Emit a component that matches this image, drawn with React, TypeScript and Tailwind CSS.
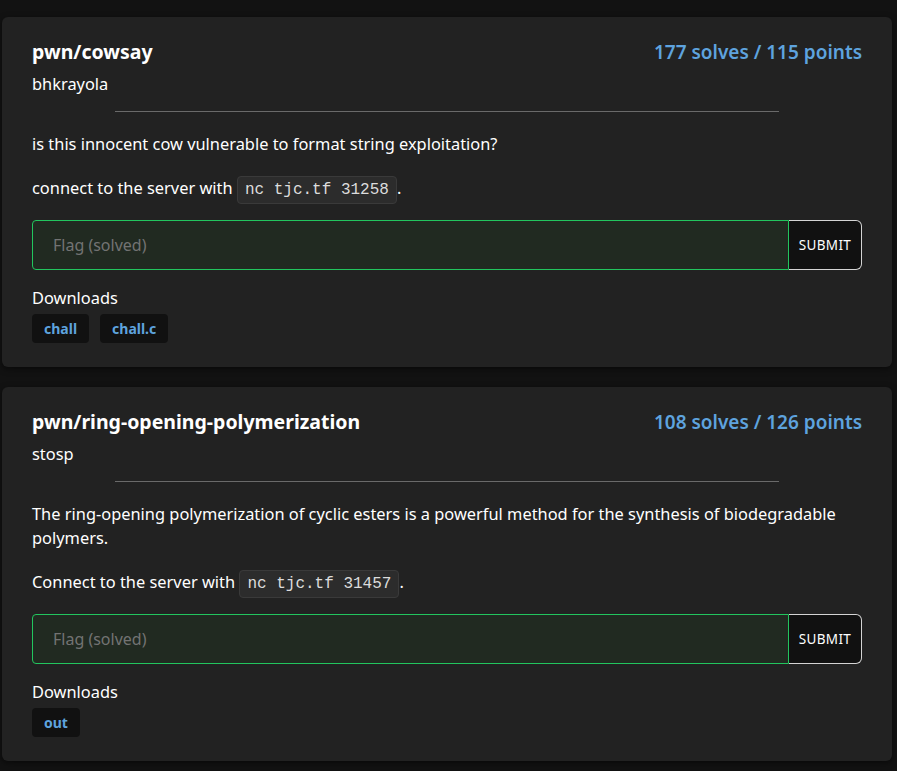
const font = { fontFamily: '"Noto Sans", "Open Sans", sans-serif' };

type Challenge = {
  name: string;
  author: string;
  stats: string;
  description: string;
  connect: string;
  command: string;
  files: string[];
};

const challenges: Challenge[] = [
  {
    name: 'pwn/cowsay',
    author: 'bhkrayola',
    stats: '177 solves / 115 points',
    description: 'is this innocent cow vulnerable to format string exploitation?',
    connect: 'connect to the server with',
    command: 'nc tjc.tf 31258',
    files: ['chall', 'chall.c'],
  },
  {
    name: 'pwn/ring-opening-polymerization',
    author: 'stosp',
    stats: '108 solves / 126 points',
    description:
      'The ring-opening polymerization of cyclic esters is a powerful method for the synthesis of biodegradable polymers.',
    connect: 'Connect to the server with',
    command: 'nc tjc.tf 31457',
    files: ['out'],
  },
];

function ChallengeCard({ c }: { c: Challenge }) {
  return (
    <div className="bg-[#222222] rounded-md px-[30px] pt-[21px] pb-[24px] shadow-[0_2px_6px_rgba(0,0,0,0.5)]">
      {/* Header */}
      <div className="flex items-center justify-between">
        <h2 className="text-[19.5px] leading-[28px] font-bold text-white">{c.name}</h2>
        <span className="text-[19px] leading-[28px] font-semibold text-[#5ea3de]">{c.stats}</span>
      </div>
      <div className="mt-[6px] text-[16.4px] leading-[24px] text-white">{c.author}</div>
      <hr className="mx-auto mt-[15px] w-[80%] border-0 border-t border-[#6a6a6a]" />

      {/* Description */}
      <p className="mt-[20px] text-[16.4px] leading-[24px] text-white">{c.description}</p>
      <p className="mt-[20px] text-[16.4px] leading-[24px] text-white">
        {c.connect}{' '}
        <code
          className="inline-block px-[7px] py-[1px] leading-[24px] rounded bg-[#2c2c2c] border border-[#3a3a3a] text-[#dcdcdc] text-[16px]"
          style={{ fontFamily: '"Liberation Mono", monospace' }}
        >
          {c.command}
        </code>
        .
      </p>

      {/* Flag form */}
      <div className="flex mt-[16px] h-[50px]">
        <input
          disabled
          placeholder="Flag (solved)"
          className="flex-1 h-full px-5 bg-[#212a21] border border-[#22c55e] rounded-l text-[16px] text-white placeholder:text-[#737373] outline-none"
          style={font}
        />
        <button
          className="w-[73px] h-full bg-[#111111] border border-l-0 border-[#d4d4d4] rounded-r-md text-white text-[13.5px] tracking-wide uppercase"
          style={font}
        >
          Submit
        </button>
      </div>

      {/* Downloads */}
      <div className="mt-[16px] text-[16.4px] leading-[24px] text-white">Downloads</div>
      <div className="flex gap-[11px] mt-[4px]">
        {c.files.map((f) => (
          <span
            key={f}
            className="h-[29px] px-[12px] flex items-center rounded bg-[#111111] text-[#5ea3de] text-[14px] font-bold"
          >
            {f}
          </span>
        ))}
      </div>
    </div>
  );
}

export default function App() {
  return (
    <div className="min-h-screen w-full bg-[#121212] pt-[17px] pl-[2px] pr-[5px] pb-[11px]" style={font}>
      <div className="flex flex-col gap-[20px]">
        {challenges.map((c) => (
          <ChallengeCard key={c.name} c={c} />
        ))}
      </div>
    </div>
  );
}
